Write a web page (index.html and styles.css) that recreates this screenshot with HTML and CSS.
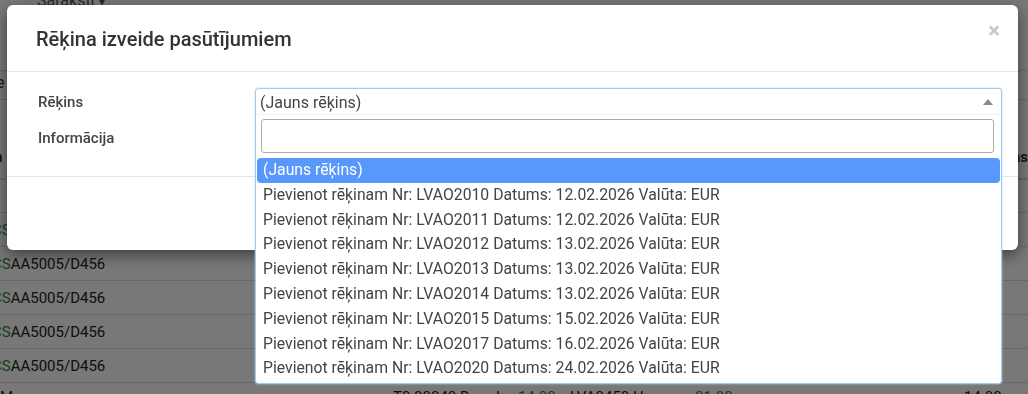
FILE: index.html
```html
<!DOCTYPE html>
<html>
<head>
	<meta charset="utf-8">
	<title>Rēķina izveide</title>
	<link rel="stylesheet" href="styles.css">
</head>
<body>
	<div class="page">
		<div class="topnav"><span class="menu">Saraksti ▾</span></div>
		<div class="toolbar"></div>
		<div class="filter"></div>
		<table class="grid">
			<tr class="head"><th>Nosaukum</th><th class="right">Klas</th></tr>
			<tr class="spacer"><td></td><td></td></tr>
			<tr><td><b>CS</b>AA5005/D456</td><td></td></tr>
			<tr><td><b>CS</b>AA5005/D456</td><td></td></tr>
			<tr><td><b>CS</b>AA5005/D456</td><td></td></tr>
			<tr><td><b>CS</b>AA5005/D456</td><td></td></tr>
			<tr><td><b>CS</b>AA5005/D456</td><td></td></tr>
			<tr class="last">
				<td colspan="2">
					<div class="cells">
						<span class="t0">M</span>
						<span class="t1">T0 00040 Dmmks</span>
						<span class="g g1">14.00</span>
						<span class="t2">LVA0450 Hor</span>
						<span class="g g2">21.00</span>
						<span class="t3">14.00</span>
					</div>
				</td>
			</tr>
		</table>
	</div>

	<div class="backdrop"></div>

	<div class="modal">
		<div class="modal-header">
			<h4 class="modal-title">Rēķina izveide pasūtījumiem</h4>
			<span class="close">×</span>
		</div>
		<div class="modal-body">
			<div class="form-row">
				<label>Rēķins</label>
				<div class="s2">
					<div class="s2-selection">
						<span class="s2-text">(Jauns rēķins)</span>
						<span class="s2-arrow"></span>
					</div>
					<div class="s2-dropdown">
						<div class="s2-search"><input type="text"></div>
						<ul class="s2-results">
							<li class="active">(Jauns rēķins)</li>
							<li>Pievienot rēķinam Nr: LVAO2010 Datums: 12.02.2026 Valūta: EUR</li>
							<li>Pievienot rēķinam Nr: LVAO2011 Datums: 12.02.2026 Valūta: EUR</li>
							<li>Pievienot rēķinam Nr: LVAO2012 Datums: 13.02.2026 Valūta: EUR</li>
							<li>Pievienot rēķinam Nr: LVAO2013 Datums: 13.02.2026 Valūta: EUR</li>
							<li>Pievienot rēķinam Nr: LVAO2014 Datums: 13.02.2026 Valūta: EUR</li>
							<li>Pievienot rēķinam Nr: LVAO2015 Datums: 15.02.2026 Valūta: EUR</li>
							<li>Pievienot rēķinam Nr: LVAO2017 Datums: 16.02.2026 Valūta: EUR</li>
							<li>Pievienot rēķinam Nr: LVAO2020 Datums: 24.02.2026 Valūta: EUR</li>
						</ul>
					</div>
				</div>
			</div>
			<div class="form-row">
				<label>Informācija</label>
			</div>
		</div>
		<div class="modal-footer"></div>
	</div>
</body>
</html>
```

FILE: styles.css
```css
	html, body{
		margin: 0;
		padding: 0;
		height: 100%;
		overflow: hidden;
	}
	body{
		font-family: Roboto, "Liberation Sans", sans-serif;
		font-size: 14px;
		color: #333;
		background: #fff;
	}

	/* page behind the dialog */
	.page{
		height: 394px;
	}
	.topnav{
		height: 12px;
		padding-left: 37px;
		overflow: hidden;
	}
	.topnav .menu{
		display: block;
		margin-top: -9px;
		font-size: 16px;
		color: #555;
	}
	.toolbar{
		height: 58px;
		border-bottom: 1px solid #ddd;
	}
	.filter{
		height: 28px;
		border-bottom: 1px solid #ddd;
	}
	.filter::before{
		content: "e";
		display: block;
		margin-left: -4px;
		padding-top: 2px;
		font-size: 16px;
		color: #333;
	}
	.grid{
		width: 100%;
		border-collapse: collapse;
		font-size: 15px;
	}
	.grid th{
		height: 66px;
		padding: 0 0 12px 0;
		vertical-align: bottom;
		text-align: left;
		font-weight: bold;
		border-bottom: 2px solid #ddd;
		text-indent: -70px;
		overflow: hidden;
	}
	.grid th.right{
		text-align: right;
		text-indent: 0;
		width: 30px;
		white-space: nowrap;
	}
	.grid td{
		height: 33px;
		padding: 0;
		border-bottom: 1px solid #ddd;
		color: #222;
		white-space: nowrap;
	}
	.grid .spacer td{
		height: 32px;
	}
	.grid td b{
		font-weight: normal;
		color: #2e8b2e;
		margin-left: -8px;
	}
	.grid .last td{
		vertical-align: top;
		padding-top: 5px;
	}
	.cells{
		display: flex;
	}
	.cells span{
		flex: none;
	}
	.cells .t0{ width: 393px; }
	.cells .t1{ width: 125px; }
	.cells .g{ color: #2e8b2e; }
	.cells .g1{ width: 52px; }
	.cells .t2{ width: 125px; }
	.cells .g2{ width: 269px; }

	.backdrop{
		position: fixed;
		left: 0;
		top: 0;
		right: 0;
		bottom: 0;
		background: rgba(0, 0, 0, 0.53);
	}

	/* dialog */
	.modal{
		position: fixed;
		left: 7px;
		top: 5px;
		width: 1011px;
		height: 245px;
		background: #fff;
		border-radius: 6px;
		box-shadow: 0 5px 15px rgba(0, 0, 0, 0.5);
	}
	.modal-header{
		height: 66px;
		border-bottom: 1px solid #e5e5e5;
		display: flex;
		align-items: center;
		justify-content: space-between;
		padding: 0 18px 0 29px;
	}
	.modal-title{
		margin: 0;
		font-size: 20px;
		font-weight: 500;
		color: #333;
		padding-top: 2px;
	}
	.close{
		font-size: 22px;
		font-weight: bold;
		color: #c8c8c8;
		line-height: 1;
		margin-top: -14px;
	}
	.modal-body{
		height: 105px;
		border-bottom: 1px solid #e5e5e5;
		padding: 16px 16px 0 31px;
		box-sizing: border-box;
	}
	.form-row{
		display: flex;
		align-items: center;
		min-height: 26px;
		margin-bottom: 9px;
	}
	.form-row label{
		width: 217px;
		flex: none;
		font-size: 15px;
		font-weight: 500;
		color: #444;
	}

	/* select2 style picker */
	.s2{
		flex: 1;
		position: relative;
	}
	.s2-selection{
		height: 26px;
		border: 1px solid #9fcbf2;
		border-bottom-color: #b7d9f7;
		border-radius: 4px 4px 0 0;
		box-shadow: 0 0 2px #a9d2f6;
		display: flex;
		align-items: center;
		justify-content: space-between;
		padding: 0 8px 0 4px;
	}
	.s2-text{
		font-size: 16px;
		color: #444;
		padding-top: 1px;
	}
	.s2-arrow{
		width: 0;
		height: 0;
		border-left: 5px solid transparent;
		border-right: 5px solid transparent;
		border-bottom: 6px solid #888;
	}
	.s2-dropdown{
		position: absolute;
		left: 0;
		right: 0;
		top: 27px;
		background: #fff;
		border: 1px solid #9fcbf2;
		border-top: none;
		border-radius: 0 0 4px 4px;
		box-shadow: 0 0 2px #a9d2f6;
		padding: 4px 1px 2px 1px;
		z-index: 5;
	}
	.s2-search{
		padding: 0 6px 0 4px;
	}
	.s2-search input{
		display: block;
		width: 100%;
		box-sizing: border-box;
		height: 34px;
		border: 1px solid #aaa;
		border-radius: 3px;
		outline: none;
		font-size: 16px;
	}
	.s2-results{
		list-style: none;
		margin: 5px 0 0 0;
		padding: 0;
	}
	.s2-results li{
		font-size: 15.75px;
		line-height: 18.8px;
		padding: 3px 6px;
		color: #444;
		white-space: nowrap;
	}
	.s2-results li.active{
		background: #5897fb;
		color: #fff;
		border-radius: 4px;
	}
```
